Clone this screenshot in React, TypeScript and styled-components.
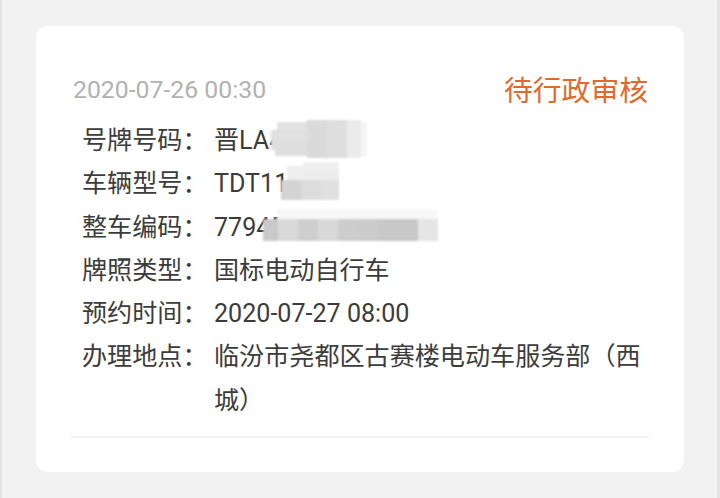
import React from "react";
import styled, { createGlobalStyle } from "styled-components";

const Global = createGlobalStyle`
  html, body { margin: 0; padding: 0; background: #f2f2f2; }
  body { font-family: Roboto, "Noto Sans CJK SC", sans-serif; }
`;

const Page = styled.div`
  box-sizing: border-box;
  width: 720px;
  height: 498px;
  padding: 26px 36px 0 36px;
  background: #f2f2f2;
  box-shadow: inset 2px 0 0 #e2e2e2, inset -3px 0 0 #e4e4e4;
`;

const Card = styled.div`
  background: #ffffff;
  border-radius: 12px;
  padding: 43px 36px 35px 37px;
  height: 446px;
  box-sizing: border-box;
`;

const Header = styled.div`
  display: flex;
  justify-content: space-between;
  align-items: center;
  height: 40px;
  margin-bottom: 10px;
`;

const Time = styled.span`
  font-size: 24.8px;
  color: #b2b2b2;
`;

const Status = styled.span`
  font-size: 28.8px;
  color: #e2692c;
  margin-top: -2px;
`;

const Rows = styled.div`
  display: flex;
  flex-direction: column;
  padding-left: 9px;
`;

const Row = styled.div`
  display: grid;
  grid-template-columns: 132px 440px;
  font-size: 25.1px;
  line-height: 43.3px;
  color: #3c3c3c;
`;

const Label = styled.span`
  white-space: nowrap;
`;

const Value = styled.span`
  position: relative;
  word-break: break-all;
`;

const MosaicSvg = styled.svg<{ $left: number; $top: number }>`
  position: absolute;
  left: ${(p) => p.$left}px;
  top: ${(p) => p.$top}px;
  overflow: visible;
`;

const Divider = styled.div`
  height: 2px;
  background: #f3f3f3;
  margin: 14px -1px 0 -3px;
`;

type Cell = [number, number, number, number, string];

const Mosaic: React.FC<{ left: number; top: number; w: number; h: number; cells: Cell[]; id: string }> = ({
  left,
  top,
  w,
  h,
  cells,
  id,
}) => (
  <MosaicSvg $left={left} $top={top} width={w} height={h} viewBox={`0 0 ${w} ${h}`}>
    <defs>
      <filter id={id} x="-10%" y="-10%" width="120%" height="120%">
        <feGaussianBlur stdDeviation="1.2" />
      </filter>
    </defs>
    <g filter={`url(#${id})`}>
      {cells.map(([x, y, cw, ch, c], i) => (
        <rect key={i} x={x} y={y} width={cw} height={ch} fill={c} />
      ))}
    </g>
  </MosaicSvg>
);

const m1: Cell[] = [
  [8, 4, 30, 18, "#e2e2e2"],
  [2, 12, 36, 20, "#e0e0e0"],
  [6, 22, 32, 16, "#dedede"],
  [38, 2, 20, 38, "#dadada"],
  [58, 2, 20, 38, "#dedede"],
  [78, 2, 14, 38, "#ebebeb"],
  [92, 4, 6, 34, "#f6f6f6"],
];

const m2: Cell[] = [
  [8, 4, 52, 16, "#ededed"],
  [24, 0, 36, 8, "#f0f0f0"],
  [2, 18, 20, 20, "#d3d3d3"],
  [22, 18, 20, 20, "#dcdcdc"],
  [42, 18, 18, 20, "#e0e0e0"],
];

const m3: Cell[] = [
  [14, 2, 160, 12, "#f7f7f7"],
  [0, 12, 15, 22, "#c9c9c9"],
  [15, 12, 20, 22, "#d9d9d9"],
  [35, 12, 20, 22, "#cecece"],
  [55, 12, 20, 22, "#d8d8d8"],
  [75, 12, 20, 22, "#cdcdcd"],
  [95, 12, 20, 22, "#cbcbcb"],
  [115, 12, 40, 22, "#c8c8c8"],
  [155, 12, 20, 22, "#e5e5e5"],
];

const App: React.FC = () => (
  <>
    <Global />
    <Page>
      <Card>
        <Header>
          <Time>2020-07-26 00:30</Time>
          <Status>待行政审核</Status>
        </Header>
        <Rows>
          <Row>
            <Label>号牌号码：</Label>
            <Value>
              晋LA4
              <Mosaic id="m1" left={55} top={-1} w={98} h={42} cells={m1} />
            </Value>
          </Row>
          <Row>
            <Label>车辆型号：</Label>
            <Value>
              TDT11
              <Mosaic id="m2" left={65} top={0} w={62} h={40} cells={m2} />
            </Value>
          </Row>
          <Row>
            <Label>整车编码：</Label>
            <Value>
              77945
              <Mosaic id="m3" left={49} top={1} w={176} h={36} cells={m3} />
            </Value>
          </Row>
          <Row>
            <Label>牌照类型：</Label>
            <Value>国标电动自行车</Value>
          </Row>
          <Row>
            <Label>预约时间：</Label>
            <Value>2020-07-27 08:00</Value>
          </Row>
          <Row>
            <Label>办理地点：</Label>
            <Value>临汾市尧都区古赛楼电动车服务部（西城）</Value>
          </Row>
        </Rows>
        <Divider />
      </Card>
    </Page>
  </>
);

export default App;
